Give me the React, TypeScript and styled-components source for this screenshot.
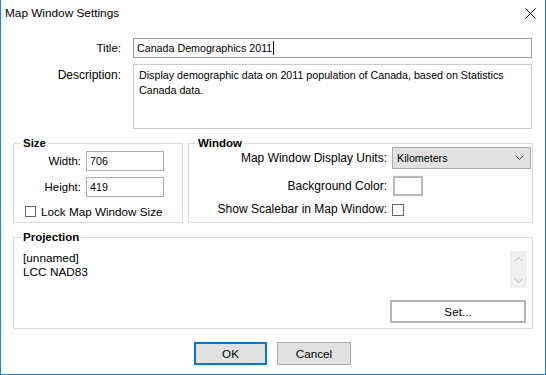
import styled, { createGlobalStyle } from "styled-components";

const GlobalStyle = createGlobalStyle`
  html, body {
    margin: 0;
    padding: 0;
    background: #ffffff;
  }
  body {
    font-family: "Liberation Sans", Arial, sans-serif;
    font-size: 11.5px;
    color: #000;
  }
  * {
    box-sizing: border-box;
  }
`;

const Dialog = styled.div`
  width: 546px;
  height: 375px;
  border: 1px solid #1883d7;
  border-top: none;
  background: #fff;
  display: flex;
  flex-direction: column;
`;

const TitleBar = styled.div`
  height: 26px;
  display: flex;
  align-items: center;
  justify-content: space-between;
  padding: 0 9px 0 4px;
`;

const TitleText = styled.span`
  font-size: 11.8px;
`;

const CloseIcon = styled.svg`
  width: 11px;
  height: 11px;
  display: block;
`;

const Body = styled.div`
  padding: 12px 12px 0 12px;
  display: flex;
  flex-direction: column;
`;

const FieldGrid = styled.div`
  display: grid;
  grid-template-columns: 108px 1fr;
  column-gap: 12px;
  row-gap: 6px;
  padding-right: 1px;
`;

const Label = styled.label<{ $top?: boolean; $size?: number }>`
  text-align: right;
  align-self: ${(p) => (p.$top ? "start" : "center")};
  padding-top: ${(p) => (p.$top ? "4px" : "0")};
  font-size: ${(p) => p.$size || 11.5}px;
  line-height: 14px;
  white-space: nowrap;
`;

const TextBox = styled.div<{ $dark?: boolean }>`
  height: 20px;
  border: 1px solid ${(p) => (p.$dark ? "#9a9a9a" : "#adadad")};
  background: #fff;
  padding: 0 3px;
  display: flex;
  align-items: center;
  white-space: nowrap;
  font-size: 10.7px;
`;

const Caret = styled.span`
  display: inline-block;
  width: 1px;
  height: 14px;
  background: #000;
  margin-left: 1px;
`;

const MultiLine = styled.div`
  height: 65px;
  border: 1px solid #cccccc;
  padding: 3px 5px;
  line-height: 15px;
  font-size: 10.7px;
`;

const GroupRow = styled.div`
  display: flex;
  gap: 5px;
  margin-top: 8px;
`;

const Group = styled.fieldset<{ $width?: string }>`
  margin: 0;
  padding: 0;
  min-width: 0;
  border: 1px solid #dcdcdc;
  width: ${(p) => p.$width || "auto"};
  flex: ${(p) => (p.$width ? "none" : "1")};
`;

const Legend = styled.legend`
  font-weight: bold;
  line-height: 13px;
  height: 13px;
  padding: 0 2px;
  margin-left: 7px;
`;

const SizeContent = styled.div`
  padding: 1px 0 5px 0;
`;

const SizeGrid = styled.div`
  display: grid;
  grid-template-columns: 67px 78px;
  grid-template-rows: 20px 20px;
  column-gap: 5px;
  row-gap: 6px;
`;

const CheckRow = styled.div`
  height: 11px;
  display: flex;
  align-items: center;
  gap: 5px;
  margin-top: 9px;
  padding-left: 11px;
  font-size: 11.7px;
`;

const CheckBox = styled.span<{ $size?: number }>`
  width: ${(p) => p.$size || 11}px;
  height: ${(p) => p.$size || 11}px;
  border: 1px solid #666666;
  background: #fff;
  display: block;
  flex: none;
`;

const WindowGrid = styled.div`
  display: grid;
  grid-template-columns: 1fr 139px;
  column-gap: 5px;
  margin-top: -3px;
  padding-right: 1px;
  grid-template-rows: 22px 20px 12px;
  row-gap: 7px;
`;

const ThirdRow = styled.div`
  margin-top: 1px;
  display: flex;
  align-items: center;
`;

const Select = styled.div`
  height: 22px;
  border: 1px solid #adadad;
  background: #e1e1e1;
  display: flex;
  align-items: center;
  justify-content: space-between;
  padding: 0 6px 0 4px;
  font-size: 10.7px;
`;

const Chevron = styled.svg`
  width: 9px;
  height: 6px;
  display: block;
`;

const ColorBox = styled.div`
  width: 30px;
  height: 20px;
  margin-left: 1px;
  border: 2px solid #b9b9b9;
  background: #fff;
`;

const ProjectionGroup = styled(Group)`
  margin-top: 8px;
`;

const ProjectionContent = styled.div`
  padding: 7px 5px 5px 9px;
  display: flex;
  flex-direction: column;
`;

const ProjectionTop = styled.div`
  height: 37px;
  display: flex;
  justify-content: space-between;
`;

const ProjectionText = styled.div`
  line-height: 14px;
  font-size: 11.8px;
`;

const ScrollBar = styled.div`
  width: 17px;
  height: 37px;
  background: #f0f0f0;
  display: flex;
  flex-direction: column;
  justify-content: space-between;
  align-items: center;
  padding: 6px 0 5px;
`;

const ArrowIcon = styled.svg`
  width: 9px;
  height: 5px;
  display: block;
`;

const SetRow = styled.div`
  display: flex;
  justify-content: flex-end;
  margin-top: 12px;
  padding-right: 1px;
`;

const Button = styled.button<{ $w: number; $primary?: boolean; $white?: boolean }>`
  width: ${(p) => p.$w}px;
  height: 23px;
  margin: 0;
  padding: 0;
  font: inherit;
  font-size: 11.7px;
  color: #000;
  background: ${(p) => (p.$white ? "#ffffff" : "#e1e1e1")};
  border: ${(p) =>
    p.$primary ? "2px solid #0078d7" : p.$white ? "2px solid #b4b4b4" : "1px solid #adadad"};
`;

const Footer = styled.div`
  display: flex;
  justify-content: center;
  gap: 10px;
  margin-top: 13px;
  padding-right: 1px;
`;

export default function App() {
  return (
    <>
      <GlobalStyle />
      <Dialog>
        <TitleBar>
          <TitleText>Map Window Settings</TitleText>
          <CloseIcon viewBox="0 0 11 11">
            <path d="M0.5 0.5 L10.5 10.5 M10.5 0.5 L0.5 10.5" stroke="#000" strokeWidth="1" fill="none" />
          </CloseIcon>
        </TitleBar>
        <Body>
          <FieldGrid>
            <Label>Title:</Label>
            <TextBox $dark>
              Canada Demographics 2011
              <Caret />
            </TextBox>
            <Label $top $size={12}>
              Description:
            </Label>
            <MultiLine>
              Display demographic data on 2011 population of Canada, based on Statistics Canada data.
            </MultiLine>
          </FieldGrid>

          <GroupRow>
            <Group $width="170px">
              <Legend>Size</Legend>
              <SizeContent>
                <SizeGrid>
                  <Label>Width:</Label>
                  <TextBox>706</TextBox>
                  <Label>Height:</Label>
                  <TextBox>419</TextBox>
                </SizeGrid>
                <CheckRow>
                  <CheckBox />
                  <span>Lock Map Window Size</span>
                </CheckRow>
              </SizeContent>
            </Group>
            <Group>
              <Legend>Window</Legend>
              <WindowGrid>
                <Label $size={12}>Map Window Display Units:</Label>
                <Select>
                  <span>Kilometers</span>
                  <Chevron viewBox="0 0 9 6">
                    <path d="M0.5 0.5 L4.5 4.5 L8.5 0.5" stroke="#555" strokeWidth="1" fill="none" />
                  </Chevron>
                </Select>
                <Label $size={12}>Background Color:</Label>
                <ColorBox />
                <Label $size={12}>Show Scalebar in Map Window:</Label>
                <ThirdRow>
                  <CheckBox $size={12} />
                </ThirdRow>
              </WindowGrid>
            </Group>
          </GroupRow>

          <ProjectionGroup>
            <Legend>Projection</Legend>
            <ProjectionContent>
              <ProjectionTop>
                <ProjectionText>
                  [unnamed]
                  <br />
                  LCC NAD83
                </ProjectionText>
                <ScrollBar>
                  <ArrowIcon viewBox="0 0 9 5">
                    <path d="M0.5 4.5 L4.5 0.5 L8.5 4.5" stroke="#bdbdbd" strokeWidth="1" fill="none" />
                  </ArrowIcon>
                  <ArrowIcon viewBox="0 0 9 5">
                    <path d="M0.5 0.5 L4.5 4.5 L8.5 0.5" stroke="#bdbdbd" strokeWidth="1" fill="none" />
                  </ArrowIcon>
                </ScrollBar>
              </ProjectionTop>
              <SetRow>
                <Button $w={136} $white>
                  Set...
                </Button>
              </SetRow>
            </ProjectionContent>
          </ProjectionGroup>

          <Footer>
            <Button $w={73} $primary>
              OK
            </Button>
            <Button $w={74}>Cancel</Button>
          </Footer>
        </Body>
      </Dialog>
    </>
  );
}
